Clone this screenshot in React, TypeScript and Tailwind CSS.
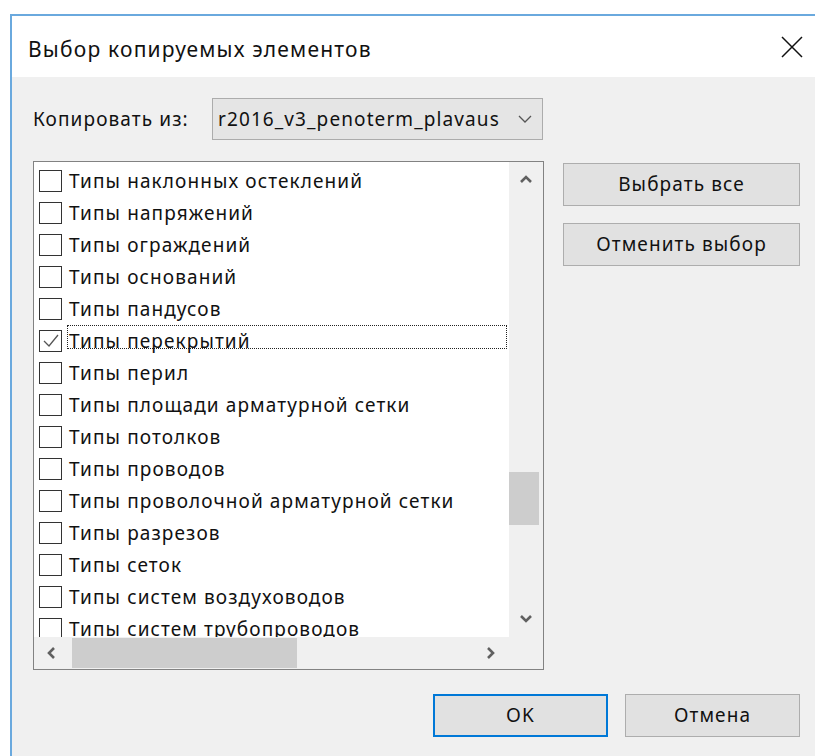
import React from 'react';

const ITEMS = [
  'Типы наклонных остеклений',
  'Типы напряжений',
  'Типы ограждений',
  'Типы оснований',
  'Типы пандусов',
  'Типы перекрытий',
  'Типы перил',
  'Типы площади арматурной сетки',
  'Типы потолков',
  'Типы проводов',
  'Типы проволочной арматурной сетки',
  'Типы разрезов',
  'Типы сеток',
  'Типы систем воздуховодов',
  'Типы систем трубопроводов',
];

const CHECKED = 'Типы перекрытий';

const font = { fontFamily: '"Noto Sans", "Open Sans", sans-serif' };

// small filled chevrons used on the scroll bar arrows
const Arrow = ({ dir }: { dir: 'up' | 'down' | 'left' | 'right' }) => {
  const pts = {
    up: '1,8 6,3 11,8',
    down: '1,3 6,8 11,3',
    left: '8,1 3,6 8,11',
    right: '3,1 8,6 3,11',
  }[dir];
  return (
    <svg width="12" height="12" viewBox="0 0 12 12">
      <polyline points={pts} fill="none" stroke="#606060" strokeWidth="2.6" />
    </svg>
  );
};

const Row = ({ label }: { label: string }) => {
  const checked = label === CHECKED;
  return (
    <div className="flex h-[32px] items-start">
      <div className="ml-[5px] mt-[5px] flex h-[22px] w-[23px] shrink-0 items-center justify-center border border-[#333] bg-white">
        {checked && (
          <svg width="18" height="16" viewBox="0 0 18 16">
            <polyline points="2,8 7,13 16,2" fill="none" stroke="#555" strokeWidth="1.3" />
          </svg>
        )}
      </div>
      <span
        className={`ml-[5px] mr-[2px] h-[24px] flex-1 whitespace-nowrap border pl-[1px] text-[19px] leading-[30px] tracking-[1.1px] text-[#111] ${
          checked ? 'border-dotted border-[#222]' : 'border-transparent'
        }`}
      >
        {label}
      </span>
    </div>
  );
};

const Button = ({ children, primary }: { children: React.ReactNode; primary?: boolean }) => (
  <button
    className={`flex h-[43px] w-full items-center justify-center bg-[#e1e1e1] text-[19px] tracking-[1.1px] text-[#111] ${
      primary ? 'border-2 border-[#0078d7]' : 'border border-[#adadad]'
    }`}
  >
    {children}
  </button>
);

export default function App() {
  return (
    <div className="min-h-[756px] overflow-hidden bg-white pl-[10px] pt-[14px]" style={font}>
      <div className="flex h-[742px] flex-col border-l-2 border-t-2 border-[#6aa9de]">
        {/* title bar */}
        <div className="flex h-[61px] shrink-0 items-center justify-between bg-white pl-[16px] pr-[12px]">
          <span className="mt-[6px] text-[21px] tracking-[1.2px] text-[#111]">Выбор копируемых элементов</span>
          <svg width="22" height="22" viewBox="0 0 22 22">
            <path d="M1 1 L21 21 M21 1 L1 21" stroke="#111" strokeWidth="1.5" />
          </svg>
        </div>

        <div className="flex-1 bg-[#f0f0f0] pl-[21px] pt-[21px]">
          <div className="flex w-[767px] flex-col">
            {/* source project */}
            <div className="flex items-center">
              <span className="w-[179px] text-[19px] tracking-[1.1px] text-[#111]">Копировать из:</span>
              <div className="flex h-[42px] w-[331px] items-center justify-between overflow-hidden border border-[#acacac] bg-[#e5e5e5] pl-[5px] pr-[10px]">
                <span className="whitespace-nowrap text-[19px] tracking-[1.1px] text-[#111]">r2016_v3_penoterm_plavaus</span>
                <svg className="shrink-0" width="14" height="8" viewBox="0 0 14 8">
                  <polyline points="1,1 7,7 13,1" fill="none" stroke="#555" strokeWidth="1.3" />
                </svg>
              </div>
            </div>

            <div className="mt-[21px] flex">
              {/* checklist */}
              <div className="flex h-[509px] w-[511px] flex-col border border-[#828282] bg-white">
                <div className="flex min-h-0 flex-1">
                  <div className="flex-1 overflow-hidden pt-[3px]">
                    {ITEMS.map((it) => (
                      <Row key={it} label={it} />
                    ))}
                  </div>
                  <div className="flex w-[34px] flex-col bg-[#f0f0f0]">
                    <div className="flex h-[36px] items-center justify-center">
                      <Arrow dir="up" />
                    </div>
                    <div className="h-[274px]" />
                    <div className="mr-[4px] h-[53px] bg-[#cdcdcd]" />
                    <div className="flex-1" />
                    <div className="flex h-[36px] items-center justify-center">
                      <Arrow dir="down" />
                    </div>
                  </div>
                </div>
                <div className="flex h-[32px] shrink-0 bg-[#f0f0f0]">
                  <div className="flex w-[36px] items-center justify-center">
                    <Arrow dir="left" />
                  </div>
                  <div className="my-[1px] ml-[2px] w-[225px] bg-[#cdcdcd]" />
                  <div className="flex-1" />
                  <div className="flex w-[36px] items-center justify-center">
                    <Arrow dir="right" />
                  </div>
                  <div className="w-[34px]" />
                </div>
              </div>

              <div className="ml-[19px] mt-[2px] flex w-[237px] flex-col gap-[17px]">
                <Button>Выбрать все</Button>
                <Button>Отменить выбор</Button>
              </div>
            </div>

            {/* dialog buttons */}
            <div className="mt-[24px] flex justify-end gap-[17px]">
              <div className="w-[175px]">
                <Button primary>OK</Button>
              </div>
              <div className="w-[175px]">
                <Button>Отмена</Button>
              </div>
            </div>
          </div>
        </div>
      </div>
    </div>
  );
}
